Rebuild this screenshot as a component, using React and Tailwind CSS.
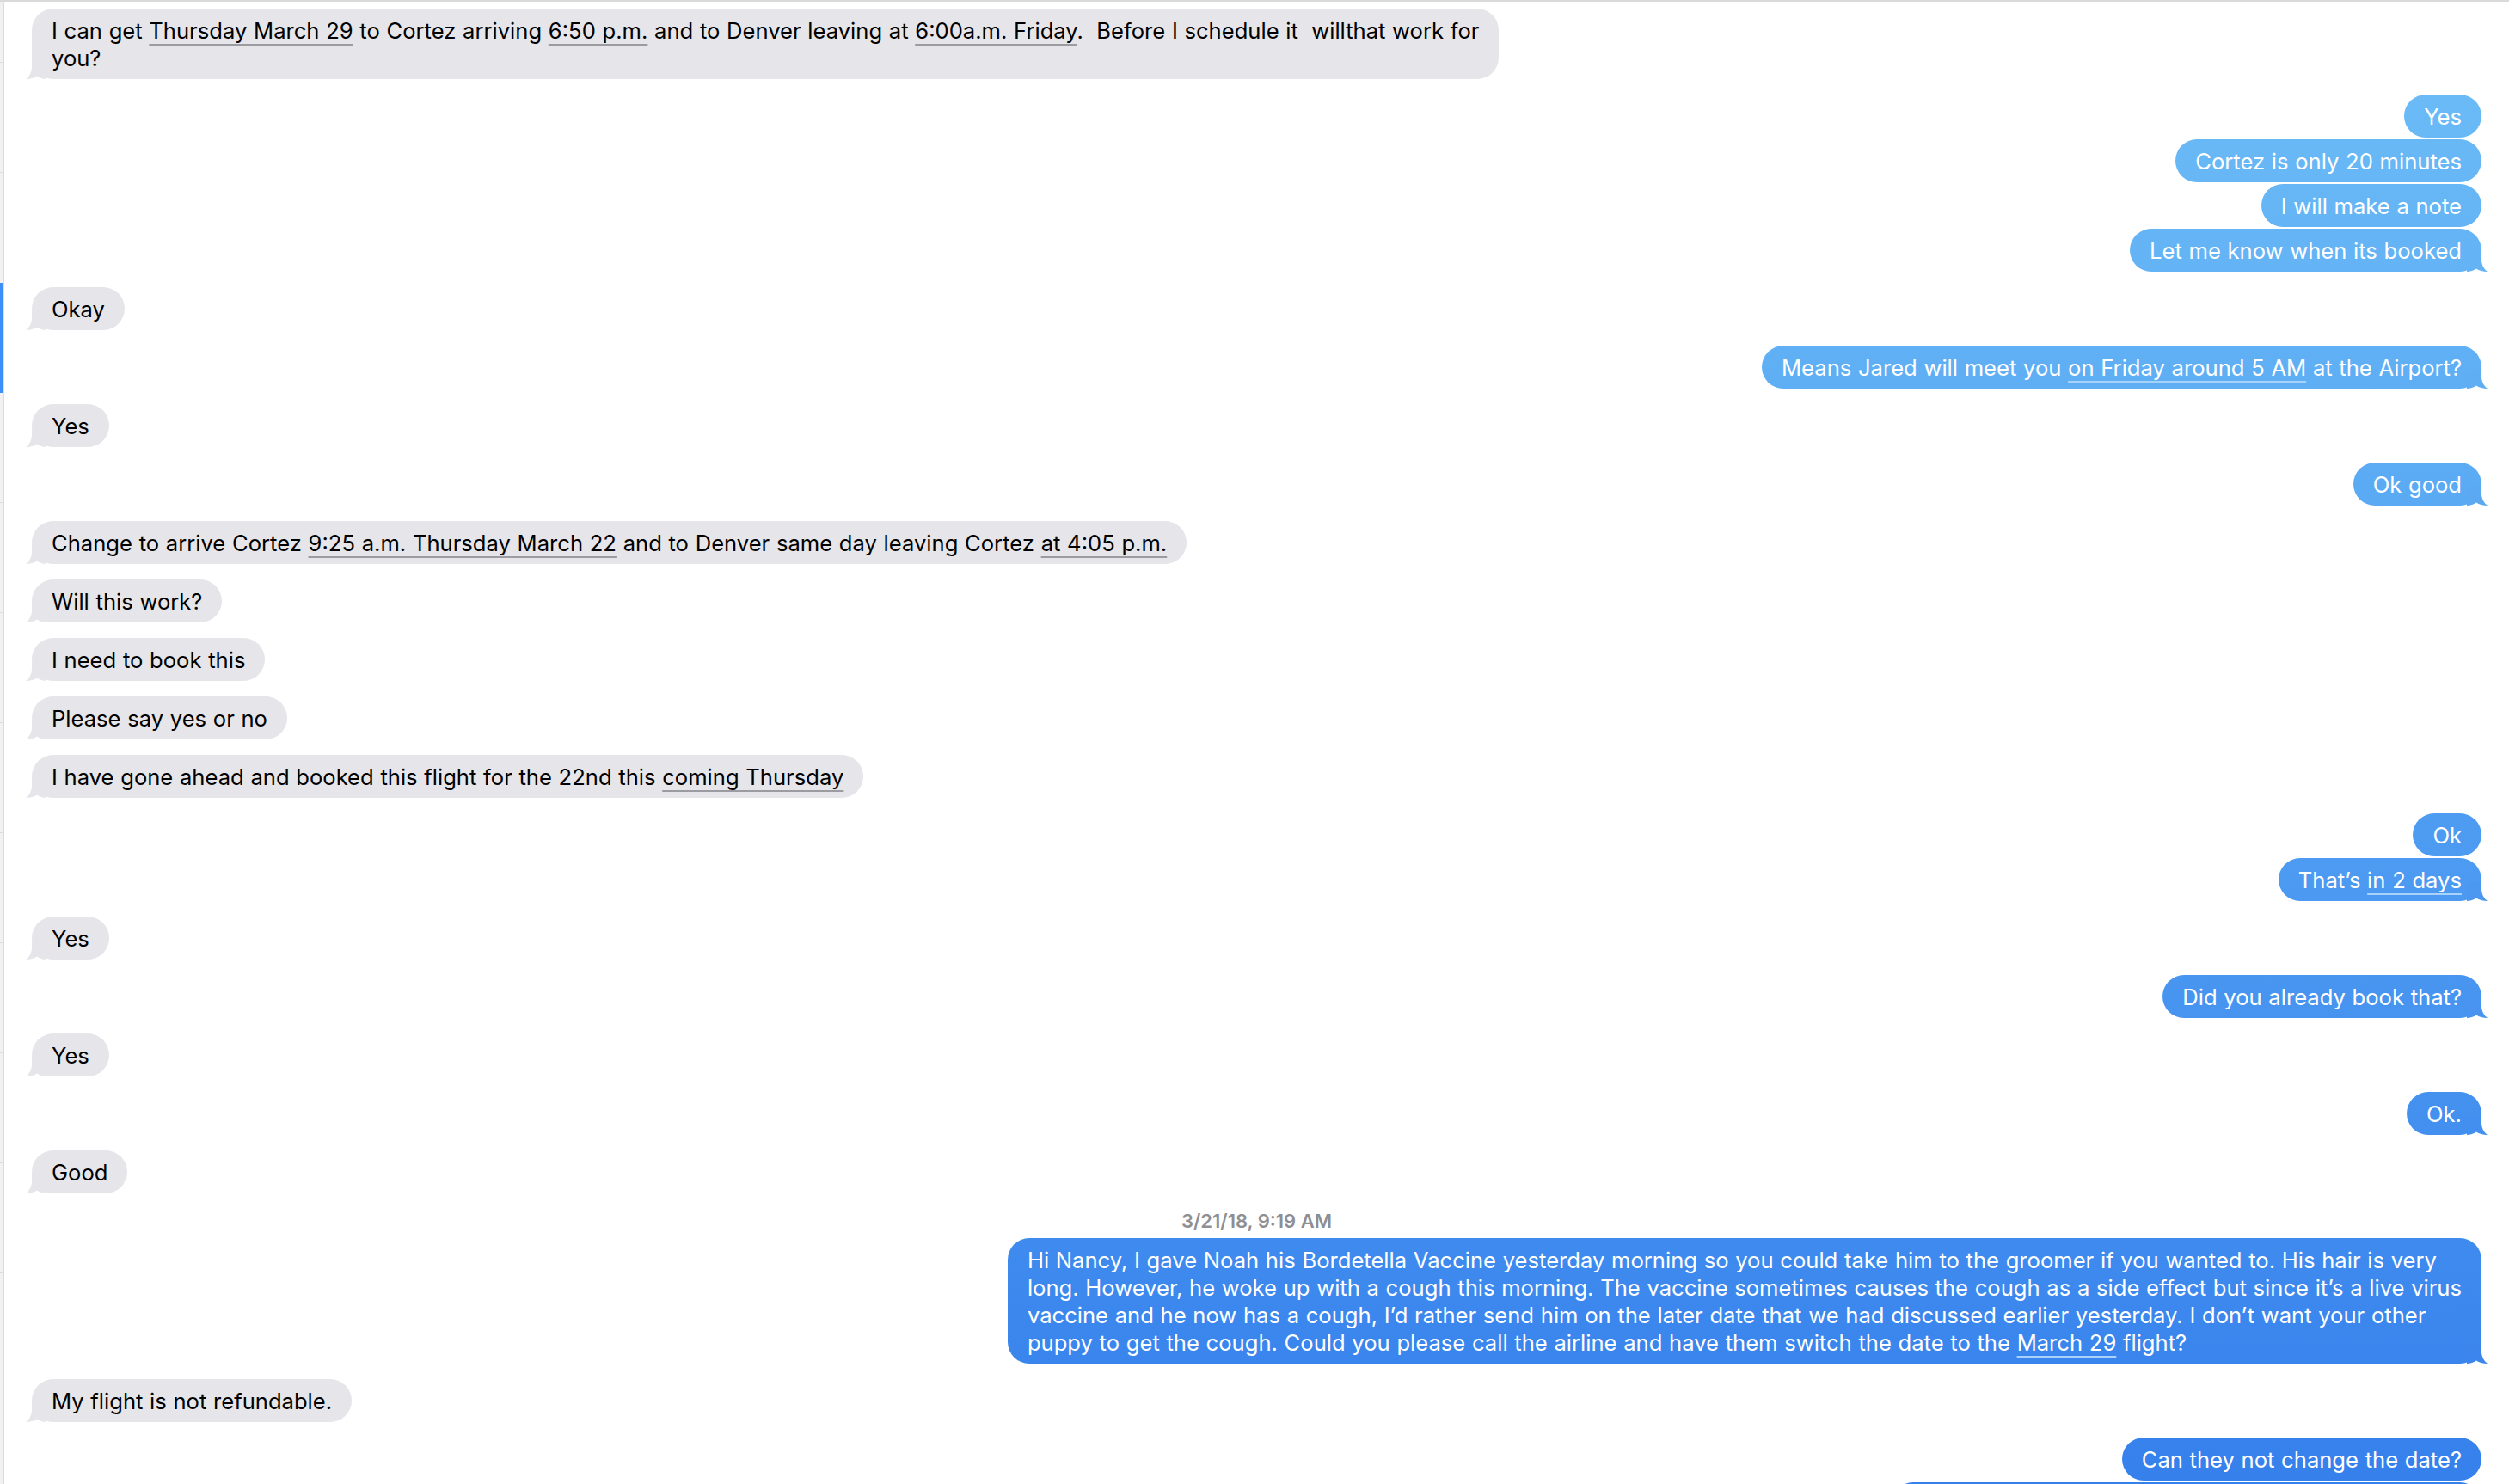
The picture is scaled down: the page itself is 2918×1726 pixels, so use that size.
import React from "react";

// bubble tails (the little hook at the bottom corner of the last bubble in a run)
function TailLeft() {
  return (
    <svg className="absolute -left-[7px] bottom-0" width="24" height="22" viewBox="0 0 24 22">
      <path d="M7 0 L7 8 C7 14 4 19 0 22 C5 22 10 20.5 13 18.5 C16 20.5 20 22 24 22 L24 0 Z" className="fill-[#e5e5ea]" />
    </svg>
  );
}

function TailRight({ fill }) {
  return (
    <svg className="absolute -right-[7px] bottom-0 -scale-x-100" width="24" height="22" viewBox="0 0 24 22">
      <path d="M7 0 L7 8 C7 14 4 19 0 22 C5 22 10 20.5 13 18.5 C16 20.5 20 22 24 22 L24 0 Z" className={fill} />
    </svg>
  );
}

function U({ children, me }) {
  return (
    <span
      className={
        me
          ? "underline decoration-[#a9d2fa] decoration-[1.5px] underline-offset-[6px]"
          : "underline decoration-[#9b9ba1] decoration-[1.5px] underline-offset-[6px]"
      }
    >
      {children}
    </span>
  );
}

const messages = [
  {
    from: "them",
    mt: "mt-[8px]",
    tail: true,
    body: (
      <>
        {"I can get "}
        <U>Thursday March 29</U>
        {" to Cortez arriving "}
        <U>6:50 p.m.</U>
        {" and to Denver leaving at "}
        <U>6:00a.m. Friday</U>
        {".  Before I schedule it  willthat work for"}
        <br />
        {"you?"}
      </>
    ),
  },
  { from: "me", mt: "mt-[18px]", body: "Yes" },
  { from: "me", mt: "mt-[2px]", body: "Cortez is only 20 minutes" },
  { from: "me", mt: "mt-[2px]", body: "I will make a note" },
  { from: "me", mt: "mt-[2px]", tail: true, fill: "fill-[#64b3f5]", body: "Let me know when its booked" },
  { from: "them", mt: "mt-[18px]", tail: true, body: "Okay" },
  {
    from: "me",
    mt: "mt-[18px]",
    tail: true,
    fill: "fill-[#5faef4]",
    body: (
      <>
        {"Means Jared will meet you "}
        <U me>on Friday around 5 AM</U>
        {" at the Airport?"}
      </>
    ),
  },
  { from: "them", mt: "mt-[18px]", tail: true, body: "Yes" },
  { from: "me", mt: "mt-[18px]", tail: true, fill: "fill-[#5ba9f3]", body: "Ok good" },
  {
    from: "them",
    mt: "mt-[18px]",
    tail: true,
    body: (
      <>
        {"Change to arrive Cortez "}
        <U>9:25 a.m. Thursday March 22</U>
        {" and to Denver same day leaving Cortez "}
        <U>at 4:05 p.m.</U>
      </>
    ),
  },
  { from: "them", mt: "mt-[18px]", tail: true, body: "Will this work?" },
  { from: "them", mt: "mt-[18px]", tail: true, body: "I need to book this" },
  { from: "them", mt: "mt-[18px]", tail: true, body: "Please say yes or no" },
  {
    from: "them",
    mt: "mt-[18px]",
    tail: true,
    body: (
      <>
        {"I have gone ahead and booked this flight for the 22nd this "}
        <U>coming Thursday</U>
      </>
    ),
  },
  { from: "me", mt: "mt-[18px]", body: "Ok" },
  {
    from: "me",
    mt: "mt-[2px]",
    tail: true,
    fill: "fill-[#4c98f0]",
    body: (
      <>
        {"That’s "}
        <U me>in 2 days</U>
      </>
    ),
  },
  { from: "them", mt: "mt-[18px]", tail: true, body: "Yes" },
  { from: "me", mt: "mt-[18px]", tail: true, fill: "fill-[#4894f0]", body: "Did you already book that?" },
  { from: "them", mt: "mt-[18px]", tail: true, body: "Yes" },
  { from: "me", mt: "mt-[18px]", tail: true, fill: "fill-[#438fef]", body: "Ok." },
  { from: "them", mt: "mt-[18px]", tail: true, body: "Good" },
  { stamp: "3/21/18, 9:19 AM" },
  {
    from: "me",
    mt: "mt-[6px]",
    tail: true,
    fill: "fill-[#3b85ed]",
    body: (
      <>
        {"Hi Nancy, I gave Noah his Bordetella Vaccine yesterday morning so you could take him to the groomer if you wanted to. His hair is very"}
        <br />
        {"long. However, he woke up with a cough this morning. The vaccine sometimes causes the cough as a side effect but since it’s a live virus"}
        <br />
        {"vaccine and he now has a cough, I’d rather send him on the later date that we had discussed earlier yesterday. I don’t want your other"}
        <br />
        {"puppy to get the cough. Could you please call the airline and have them switch the date to the "}
        <U me>March 29</U>
        {" flight?"}
      </>
    ),
  },
  { from: "them", mt: "mt-[18px]", tail: true, body: "My flight is not refundable." },
  { from: "me", mt: "mt-[18px]", body: "Can they not change the date?" },
  { from: "me", mt: "mt-[2px]", tail: true, fill: "fill-[#3680ec]", body: "I called and they said it would cost more to change it" },
];

function Bubble({ m }) {
  const me = m.from === "me";
  return (
    <div className={`flex ${me ? "justify-end" : "justify-start"} ${m.mt}`}>
      <div
        className={`relative rounded-[25px] px-[23px] pt-[10px] pb-[8px] text-[25.6px] leading-[32px] [word-spacing:0.5px] whitespace-pre ${
          me ? "text-white bg-linear-to-b from-[#6ebef7] to-[#3680ec] bg-fixed" : "text-black bg-[#e5e5ea]"
        }`}
      >
        {m.tail && (me ? <TailRight fill={m.fill} /> : <TailLeft />)}
        <span className="relative">{m.body}</span>
      </div>
    </div>
  );
}

// sidebar remnant on the far left: rows separated by hairlines, one selected
const sideRows = [
  "h-[71px] border-b border-[#dcdcdc]",
  "h-[128px] border-b border-[#dcdcdc]",
  "h-[128px]",
  "h-[128px] bg-[#3b8ff6]",
  "h-[128px] border-b border-[#dcdcdc]",
  "h-[128px] border-b border-[#dcdcdc]",
  "h-[128px] border-b border-[#dcdcdc]",
  "h-[128px] border-b border-[#dcdcdc]",
  "h-[128px] border-b border-[#dcdcdc]",
  "h-[128px] border-b border-[#dcdcdc]",
  "h-[128px] border-b border-[#dcdcdc]",
  "h-[128px] border-b border-[#dcdcdc]",
  "h-[128px] border-b border-[#dcdcdc]",
  "h-[128px] border-b border-[#dcdcdc]",
];

export default function App() {
  return (
    <div className="h-[1726px] w-full overflow-hidden bg-white border-t-2 border-[#dadada] flex font-['Inter','Noto_Sans',sans-serif] antialiased">
      <div className="w-[4px] shrink-0 bg-[#f1f1f1] flex flex-col">
        {sideRows.map((r, i) => (
          <div key={i} className={`shrink-0 ${r}`} />
        ))}
      </div>
      <div className="flex-1 border-l border-[#dcdcdc] pl-[32px] pr-[32px] flex flex-col">
        {messages.map((m, i) =>
          m.stamp ? (
            <div key={i} className="mt-[18px] h-[28px] leading-[28px] text-center text-[22px] font-semibold text-[#8e8e93]">
              {m.stamp}
            </div>
          ) : (
            <Bubble key={i} m={m} />
          )
        )}
      </div>
    </div>
  );
}
